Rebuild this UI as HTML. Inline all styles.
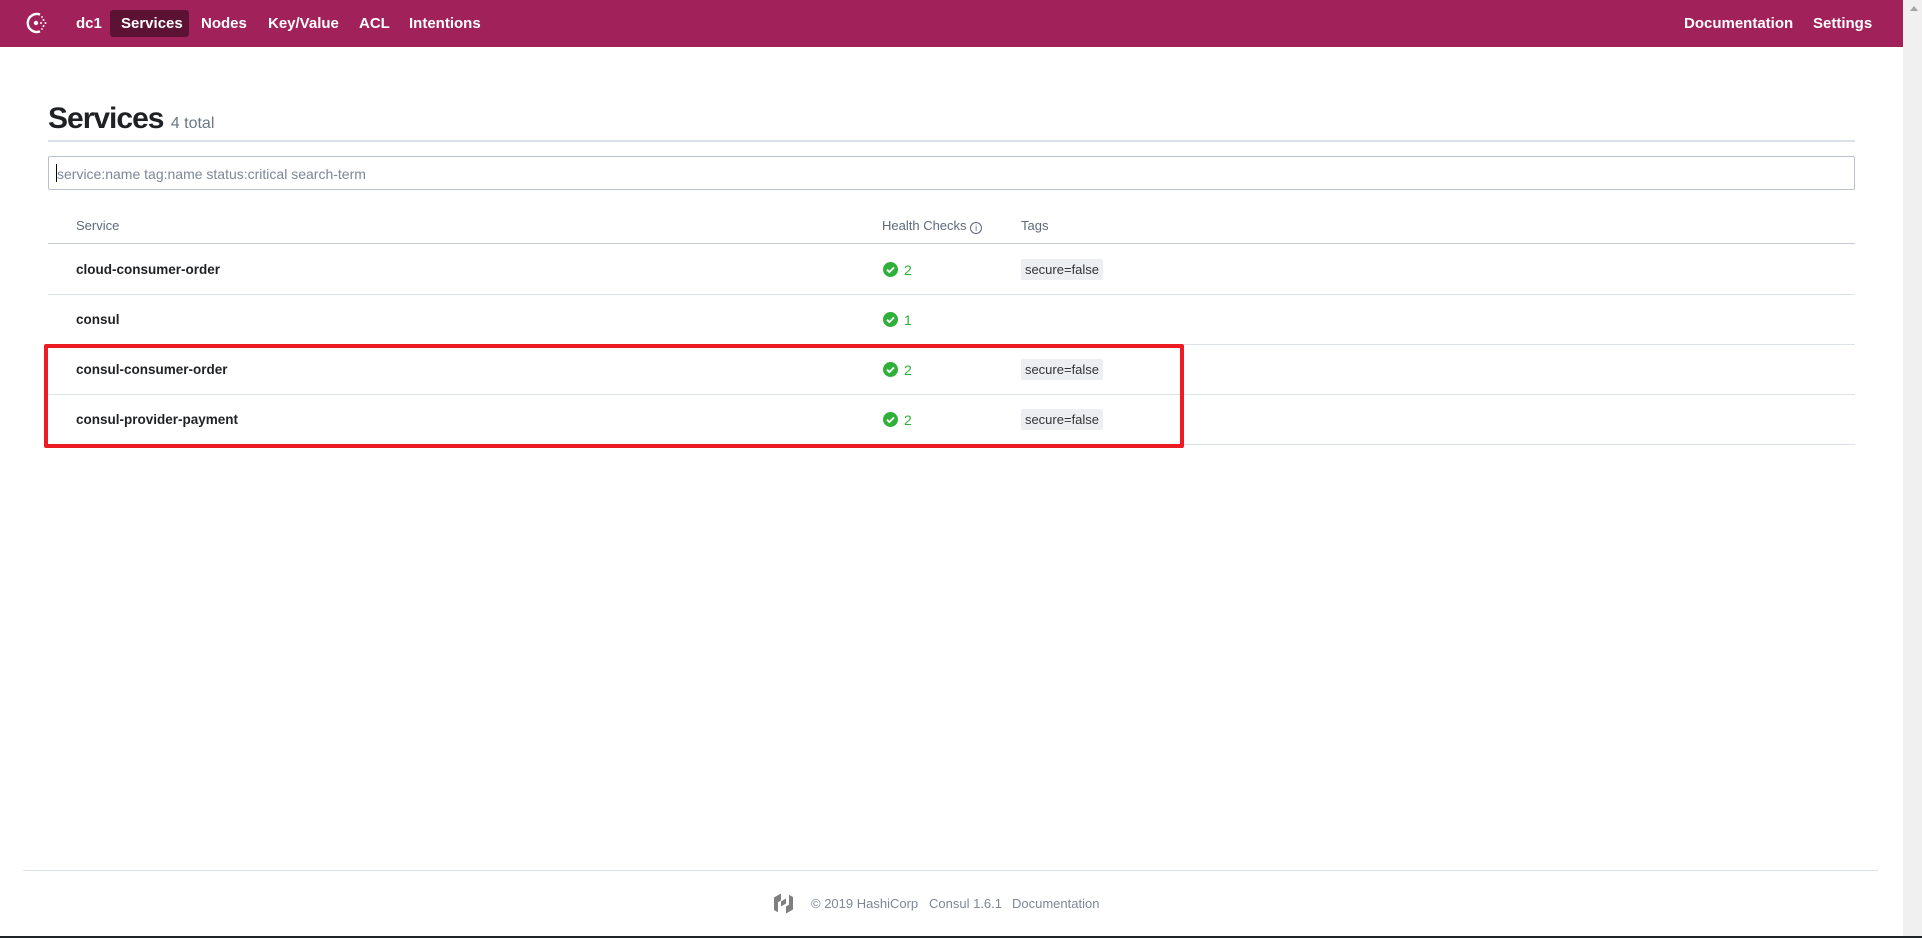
<!DOCTYPE html>
<html><head><meta charset="utf-8"><style>
*{margin:0;padding:0;box-sizing:border-box}
body{width:1922px;height:938px;position:relative;overflow:hidden;background:#fff;font-family:"Liberation Sans",Arial,sans-serif;color:#1f2124}
.hdr{position:absolute;left:0;top:0;width:1903px;height:47px;background:#a1215a}
.nav{position:absolute;top:0;height:47px;line-height:47px;color:#fff;font-weight:bold;font-size:15px}
.pill{position:absolute;left:110px;top:10px;width:79px;height:27px;background:#5c1233;border-radius:3px}
.abs{position:absolute;white-space:nowrap}
.th{font-size:13px;color:#5e6b7a}
.row{position:absolute;left:48px;width:1807px;height:1px;background:#dde1e8}
.svc{font-size:13.5px;font-weight:bold;color:#1f2124;left:76px}
.cnt{font-size:14px;color:#2eb039}
.tag{position:absolute;left:1021px;width:82px;height:21px;background:#eceef1;border-radius:2px;font-size:13px;color:#333;line-height:21px;text-align:center}
.ft{font-size:13px;color:#7c8797;top:896px}
</style></head><body>
<div class="hdr">
<svg class="abs" style="left:25px;top:11px" width="24" height="24" viewBox="0 0 24 24"><path d="M15 3.6A9 9 0 1 0 15 20.4" fill="none" stroke="#fff" stroke-width="2.4"/><circle cx="11" cy="12" r="2.2" fill="#fff"/><circle cx="16" cy="12" r="1" fill="#fff"/><circle cx="18.5" cy="9" r="1" fill="#fff"/><circle cx="18.5" cy="15" r="1" fill="#fff"/><circle cx="20.5" cy="12" r="1" fill="#fff"/><circle cx="17" cy="6" r="0.9" fill="#fff"/><circle cx="17" cy="18" r="0.9" fill="#fff"/></svg>
<div class="pill"></div>
<div class="nav" style="left:76px">dc1</div>
<div class="nav" style="left:121px">Services</div>
<div class="nav" style="left:201px">Nodes</div>
<div class="nav" style="left:268px">Key/Value</div>
<div class="nav" style="left:359px">ACL</div>
<div class="nav" style="left:409px">Intentions</div>
<div class="nav" style="left:1684px">Documentation</div>
<div class="nav" style="left:1813px">Settings</div>
</div>
<div style="position:absolute;left:1903px;top:0;width:19px;height:936px;background:#f0f0f0"></div>
<div class="abs" style="left:1910px;top:6px;width:0;height:0;border-left:4px solid transparent;border-right:4px solid transparent;border-bottom:5px solid #a3a3a3"></div>
<div style="position:absolute;left:0;top:936px;width:1922px;height:2px;background:#1e2428"></div>

<div class="abs" style="left:48px;top:102px;font-size:30px;font-weight:bold;letter-spacing:-1px">Services <span style="font-size:16px;font-weight:normal;color:#6a7786;letter-spacing:0">4 total</span></div>
<div style="position:absolute;left:48px;top:140px;width:1807px;height:2px;background:#dbe0e6"></div>
<div style="position:absolute;left:48px;top:156px;width:1807px;height:34px;border:1px solid #bac1cc;border-radius:2px"></div>
<div class="abs" style="left:57px;top:166px;font-size:14px;color:#7c8797">service:name tag:name status:critical search-term</div>
<div class="abs" style="left:56px;top:164px;width:1px;height:18px;background:#000"></div>

<div class="abs th" style="left:76px;top:218px">Service</div>
<div class="abs th" style="left:882px;top:218px">Health Checks <span style="display:inline-block;width:12px;height:12px;border:1px solid #5e6b7a;border-radius:50%;font-size:9px;line-height:10px;text-align:center;vertical-align:-1px">i</span></div>
<div class="abs th" style="left:1021px;top:218px">Tags</div>
<div class="row" style="top:243px;background:#c6cbd4"></div>
<div class="row" style="top:294px"></div>
<div class="row" style="top:344px"></div>
<div class="row" style="top:394px"></div>
<div class="row" style="top:444px"></div>

<div class="abs svc" style="top:262px">cloud-consumer-order</div>
<div class="abs svc" style="top:312px">consul</div>
<div class="abs svc" style="top:362px">consul-consumer-order</div>
<div class="abs svc" style="top:412px">consul-provider-payment</div>

<svg width="0" height="0" style="position:absolute"><defs><symbol id="ck" viewBox="0 0 16 16"><circle cx="8" cy="8" r="8" fill="#2eb039"/><path d="M4.3 8.2l2.5 2.5 4.9-4.9" fill="none" stroke="#fff" stroke-width="2"/></symbol></defs></svg>
<svg class="abs" style="left:883px;top:262px" width="15" height="15"><use href="#ck"/></svg><div class="abs cnt" style="left:904px;top:262px">2</div>
<svg class="abs" style="left:883px;top:312px" width="15" height="15"><use href="#ck"/></svg><div class="abs cnt" style="left:904px;top:312px">1</div>
<svg class="abs" style="left:883px;top:362px" width="15" height="15"><use href="#ck"/></svg><div class="abs cnt" style="left:904px;top:362px">2</div>
<svg class="abs" style="left:883px;top:412px" width="15" height="15"><use href="#ck"/></svg><div class="abs cnt" style="left:904px;top:412px">2</div>

<div class="tag" style="top:259px">secure=false</div>
<div class="tag" style="top:359px">secure=false</div>
<div class="tag" style="top:409px">secure=false</div>

<div style="position:absolute;left:44px;top:344px;width:1140px;height:104px;border:4px solid #ed1c24;border-radius:2px"></div>

<div style="position:absolute;left:23px;top:870px;width:1855px;height:1px;background:#dde1e8"></div>
<svg class="abs" style="left:773px;top:892px" width="21" height="23" viewBox="0 0 21 23"><path d="M1 5.5L8 1.5v7l-3 1.7v10L1 18z M13 21.5l7-4v-12.5l-4 -2.3v10l-3 1.7z M8 9.5l5-3v5l-5 3z" fill="#7f7f7f"/></svg>
<div class="abs ft" style="left:811px">© 2019 HashiCorp</div>
<div class="abs ft" style="left:929px">Consul 1.6.1</div>
<div class="abs ft" style="left:1012px">Documentation</div>
</body></html>
